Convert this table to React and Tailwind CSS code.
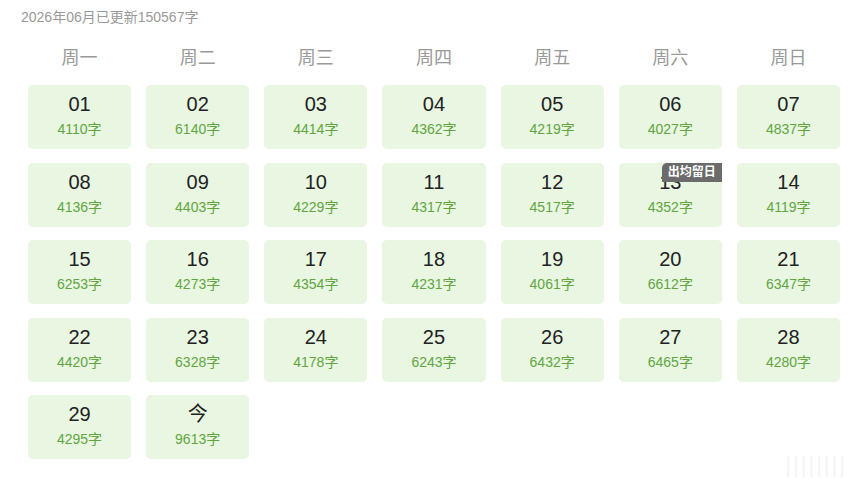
import React from "react";

const counts = [4110,6140,4414,4362,4219,4027,4837,4136,4403,4229,4317,4517,4352,4119,6253,4273,4354,4231,4061,6612,6347,4420,6328,4178,6243,6432,6465,4280,4295,9613];
const weekdays = ["周一","周二","周三","周四","周五","周六","周日"];

export default function App() {
  return (
    <div className="w-[865px] h-[489px] bg-white relative overflow-hidden" style={{ fontFamily: '"Liberation Sans", Arial, "Noto Sans CJK SC", sans-serif' }}>
      <div className="pl-[21px] pt-[9px] text-[14px] leading-[16px] text-[#999]">2026年06月已更新150567字</div>
      <div className="ml-[28px] w-[812px] mt-[22px] grid grid-cols-7 gap-x-[15.17px]">
        {weekdays.map((w) => (
          <div key={w} className="text-center text-[18px] leading-[22px] text-[#999]">{w}</div>
        ))}
      </div>
      <div className="ml-[28px] w-[812px] mt-[16px] grid grid-cols-7 gap-x-[15.17px] gap-y-[13.5px]">
        {counts.map((c, i) => {
          const label = i === 29 ? "今" : String(i + 1).padStart(2, "0");
          return (
            <div key={i} className="relative h-[64px] rounded-[5px] bg-[#e8f6e2] flex flex-col items-center pt-[8px]">
              <div className="text-[20px] leading-[22px] text-[#222]">{label}</div>
              <div className="mt-[5px] text-[14px] leading-[18px] text-[#62a53f]">{c}字</div>
              {i === 12 && (
                <div className="absolute top-0 right-0 w-[60px] h-[19px] rounded-tl-[5px] bg-[#6b6b6b] text-white text-[12px] leading-[19px] font-bold text-center">出均留日</div>
              )}
            </div>
          );
        })}
      </div>
      <div className="absolute right-[18px] bottom-[12px] text-[22px] leading-[24px] text-[#f4f4f4] tracking-[2px]">||||||||</div>
    </div>
  );
}
